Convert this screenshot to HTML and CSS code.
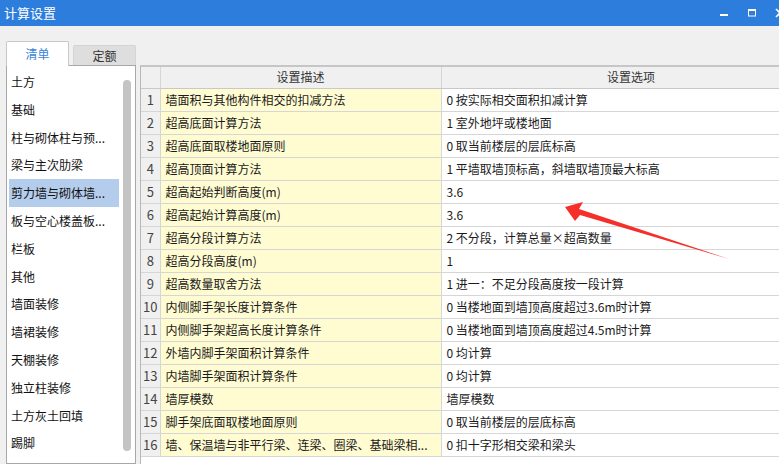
FILE: index.html
```html
<!DOCTYPE html>
<html lang="zh-CN">
<head>
<meta charset="utf-8">
<title>计算设置</title>
<link rel="stylesheet" href="styles.css">
</head>
<body>
<div class="window">
  <div class="titlebar">
    <span class="title">计算设置</span>
    <div class="controls">
      <svg class="ctl" width="12" height="12" viewBox="0 0 12 12"><rect x="2" y="7" width="8" height="2" fill="#fff"/></svg>
      <svg class="ctl" width="12" height="12" viewBox="0 0 12 12"><rect x="2.5" y="2.5" width="7" height="6.5" fill="none" stroke="#fff" stroke-width="1"/><rect x="2" y="2" width="8" height="2" fill="#fff"/></svg>
      <svg class="ctl close" width="12" height="12" viewBox="0 0 12 12"><path d="M2 2 L10 10 M10 2 L2 10" stroke="#fff" stroke-width="1.6"/></svg>
    </div>
  </div>
  <div class="main">
    <div class="side">
      <div class="tabs">
        <div class="tab active">清单</div>
        <div class="tab">定额</div>
      </div>
      <div class="panel">
        <ul class="list">
          <li>土方</li>
          <li>基础</li>
          <li>柱与砌体柱与预...</li>
          <li>梁与主次肋梁</li>
          <li class="sel">剪力墙与砌体墙...</li>
          <li>板与空心楼盖板...</li>
          <li>栏板</li>
          <li>其他</li>
          <li>墙面装修</li>
          <li>墙裙装修</li>
          <li>天棚装修</li>
          <li>独立柱装修</li>
          <li>土方灰土回填</li>
          <li>踢脚</li>
        </ul>
        <div class="scroll"><div class="thumb"></div></div>
      </div>
    </div>
    <div class="grid-wrap">
      <table class="grid">
        <colgroup><col class="c-num"><col class="c-desc"><col class="c-opt"></colgroup>
        <thead>
          <tr><th></th><th>设置描述</th><th>设置选项</th></tr>
        </thead>
        <tbody>
          <tr><td class="num">1</td><td class="desc">墙面积与其他构件相交的扣减方法</td><td class="opt">0 按实际相交面积扣减计算</td></tr>
          <tr><td class="num">2</td><td class="desc">超高底面计算方法</td><td class="opt">1 室外地坪或楼地面</td></tr>
          <tr><td class="num">3</td><td class="desc">超高底面取楼地面原则</td><td class="opt">0 取当前楼层的层底标高</td></tr>
          <tr><td class="num">4</td><td class="desc">超高顶面计算方法</td><td class="opt">1 平墙取墙顶标高，斜墙取墙顶最大标高</td></tr>
          <tr><td class="num">5</td><td class="desc">超高起始判断高度(m)</td><td class="opt">3.6</td></tr>
          <tr><td class="num">6</td><td class="desc">超高起始计算高度(m)</td><td class="opt">3.6</td></tr>
          <tr><td class="num">7</td><td class="desc">超高分段计算方法</td><td class="opt">2 不分段，计算总量×超高数量</td></tr>
          <tr><td class="num">8</td><td class="desc">超高分段高度(m)</td><td class="opt">1</td></tr>
          <tr><td class="num">9</td><td class="desc">超高数量取舍方法</td><td class="opt">1 进一：不足分段高度按一段计算</td></tr>
          <tr><td class="num">10</td><td class="desc">内侧脚手架长度计算条件</td><td class="opt">0 当楼地面到墙顶高度超过3.6m时计算</td></tr>
          <tr><td class="num">11</td><td class="desc">内侧脚手架超高长度计算条件</td><td class="opt">0 当楼地面到墙顶高度超过4.5m时计算</td></tr>
          <tr><td class="num">12</td><td class="desc">外墙内脚手架面积计算条件</td><td class="opt">0 均计算</td></tr>
          <tr><td class="num">13</td><td class="desc">内墙脚手架面积计算条件</td><td class="opt">0 均计算</td></tr>
          <tr><td class="num">14</td><td class="desc">墙厚模数</td><td class="opt">墙厚模数</td></tr>
          <tr><td class="num">15</td><td class="desc">脚手架底面取楼地面原则</td><td class="opt">0 取当前楼层的层底标高</td></tr>
          <tr><td class="num">16</td><td class="desc">墙、保温墙与非平行梁、连梁、圈梁、基础梁相...</td><td class="opt">0 扣十字形相交梁和梁头</td></tr>
        </tbody>
      </table>
    </div>
  </div>
  <svg class="arrow" width="779" height="464" viewBox="0 0 779 464">
    <polygon points="565,207 583,202 579,209 729,259 580,215 575,221" fill="#f5302a"/>
  </svg>
</div>
</body>
</html>
```

FILE: styles.css
```css
* { box-sizing: border-box; }
html, body { margin: 0; padding: 0; }
body {
  width: 779px;
  height: 464px;
  overflow: hidden;
  background: #f0f0f0;
  font-family: "Noto Sans CJK SC", "Microsoft YaHei", sans-serif;
  font-size: 12px;
  color: #1a1a1a;
}
.window { position: relative; width: 779px; height: 464px; overflow: hidden; }

.titlebar {
  height: 26px;
  background: #2c7ddc;
  display: flex;
  align-items: center;
  justify-content: space-between;
  padding-left: 4px;
}
.title { color: #fff; font-size: 13px; line-height: 26px; }
.controls { display: flex; align-items: center; gap: 16px; margin-right: -7px; }
.ctl { display: block; }

.main { display: flex; height: 438px; }

.side { width: 136px; padding-left: 6px; display: flex; flex-direction: column; }
.tabs { display: flex; align-items: flex-end; height: 39px; gap: 4px; position: relative; z-index: 2; }
.tab {
  width: 63px;
  height: 20px;
  background: #dedede;
  border: 1px solid #d4d4d4;
  border-bottom: none;
  border-radius: 2px 2px 0 0;
  text-align: center;
  line-height: 20px;
  color: #333;
  font-size: 12px;
}
.tab.active {
  height: 25px;
  line-height: 24px;
  background: #fff;
  color: #3a84d8;
  border-color: #c8c8c8;
  margin-bottom: -1px;
}
.panel {
  flex: 1;
  background: #fff;
  border: 1px solid #a8a8a8;
  display: flex;
  position: relative;
  z-index: 1;
}
.list { list-style: none; margin: 0; padding: 2px 0 0 2px; width: 114px; }
.list li {
  height: 27.8px;
  line-height: 27.8px;
  padding-left: 2px;
  white-space: nowrap;
  color: #111;
}
.list li.sel { background: #b5cdec; width: 110px; }
.scroll { width: 8px; margin-left: 2px; padding-top: 14px; }
.thumb { width: 8px; height: 371px; background: #c4c4c4; border-radius: 4px; }

.grid-wrap { margin-left: 4px; margin-top: 39px; flex: 1; overflow: hidden; background: #fff; border-left: 1px solid #b8b8b8; border-top: 2px solid #c6c6c6; }
.grid { border-collapse: collapse; table-layout: fixed; width: 680px; }
.c-num { width: 19px; }
.c-desc { width: 281px; }
.c-opt { width: 380px; }
.grid th {
  height: 21px;
  background: #f0f0f0;
  font-weight: normal;
  color: #333;
  border-right: 1px solid #d6d6d6;
  border-bottom: 1px solid #c8c8c8;
  padding: 0;
  line-height: 20px;
  text-align: center;
}
.grid td {
  height: 23px;
  border-right: 1px solid #d6d6d6;
  border-bottom: 1px solid #d6d6d6;
  padding: 0 0 0 5px;
  white-space: nowrap;
  overflow: hidden;
  line-height: 22px;
}
.grid td.num { background: #f0f0f0; color: #444; text-align: center; padding: 0; font-size: 13px; }
.grid td.desc { background: #fffcd2; }
.grid td.opt { background: #fff; }

.arrow { position: absolute; left: 0; top: 0; pointer-events: none; }
```
